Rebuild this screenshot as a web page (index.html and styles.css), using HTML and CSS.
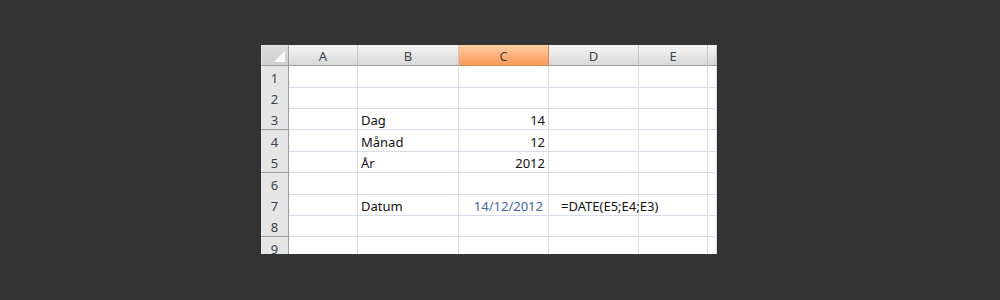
FILE: index.html
```html
<!DOCTYPE html>
<html lang="sv">
<head>
    <meta charset="UTF-8">
    <title>Datum</title>
    <link rel="stylesheet" href="styles.css">
</head>
<body>

    <div class="sheet">
        <div class="row head-row">
            <div class="corner"><span class="corner-tri"></span></div>
            <div class="col-head">A</div>
            <div class="col-head">B</div>
            <div class="col-head active">C</div>
            <div class="col-head">D</div>
            <div class="col-head">E</div>
            <div class="col-head"></div>
        </div>
        <div id="sheetBody"></div>
    </div>

    <script>
        const rows = [
            { h: 21, b: '', c: '' },
            { h: 21, b: '', c: '' },
            { h: 22, b: 'Dag', c: '14' },
            { h: 21, b: 'Månad', c: '12' },
            { h: 22, b: 'År', c: '2012' },
            { h: 21, b: '', c: '' },
            { h: 21, b: 'Datum', c: '14/12/2012', date: true, d: '=DATE(E5;E4;E3)' },
            { h: 22, b: '', c: '' },
            { h: 22, b: '', c: '' }
        ];

        function loadSheet() {
            const body = document.getElementById('sheetBody');
            rows.forEach((r, i) => {
                const row = document.createElement('div');
                row.className = 'row';
                row.style.height = r.h + 'px';
                row.innerHTML = `
                    <div class="row-head">${i + 1}</div>
                    <div class="cell"></div>
                    <div class="cell">${r.b}</div>
                    <div class="cell num ${r.date ? 'date' : ''}">${r.c}</div>
                    <div class="cell formula">${r.d || ''}</div>
                    <div class="cell"></div>
                    <div class="cell"></div>
                `;
                body.appendChild(row);
            });
        }

        loadSheet();
    </script>

</body>
</html>
```

FILE: styles.css
```css
body {
    margin: 0;
    background-color: #333333;
    font-family: "Noto Sans", "Open Sans", sans-serif;
}
.sheet {
    width: 456px;
    height: 209px;
    margin: 45px 0 0 261px;
    background: white;
    overflow: hidden;
}
.row {
    display: grid;
    grid-template-columns: 28px 69px 101px 90px 90px 69px 9px;
}
.head-row {
    height: 21px;
}
.corner,
.col-head,
.row-head,
.cell {
    box-sizing: border-box;
    display: flex;
    align-items: center;
    font-size: 13px;
}
.corner {
    position: relative;
    background: linear-gradient(#dcdcdc, #cfcfcf);
    border: 1px solid #e6e6e6;
    border-right-color: #9c9c9c;
    border-bottom-color: #9c9c9c;
}
.corner-tri {
    position: absolute;
    right: 3px;
    bottom: 3px;
    width: 0;
    height: 0;
    border-left: 11px solid transparent;
    border-bottom: 11px solid #ffffff;
}
.col-head {
    justify-content: center;
    padding-top: 1px;
    color: #3b4250;
    background: linear-gradient(#f6f6f6, #e4e4e4 60%, #d8d8d8);
    border-right: 1px solid #c6c6c6;
    border-bottom: 1px solid #9c9c9c;
}
.col-head.active {
    background: linear-gradient(#ffcfa4, #fdb27c 50%, #f99a58);
    border-right-color: #d8894a;
    border-bottom-color: #d8894a;
    color: #4a4030;
}
.row-head {
    justify-content: center;
    padding-top: 3px;
    color: #3b4250;
    background-color: #e6e6e6;
    border-right: 1px solid #9c9c9c;
    border-bottom: 1px solid #9c9c9c;
}
.cell {
    padding: 3px 3px 0;
    color: #111111;
    white-space: nowrap;
    border-right: 1px solid #d9dce8;
    border-bottom: 1px solid #d9dce8;
}
.num {
    justify-content: flex-end;
}
.date {
    color: #44699a;
    padding-right: 5px;
}
.formula {
    padding-left: 12px;
    overflow: visible;
    position: relative;
    z-index: 1;
}
```
